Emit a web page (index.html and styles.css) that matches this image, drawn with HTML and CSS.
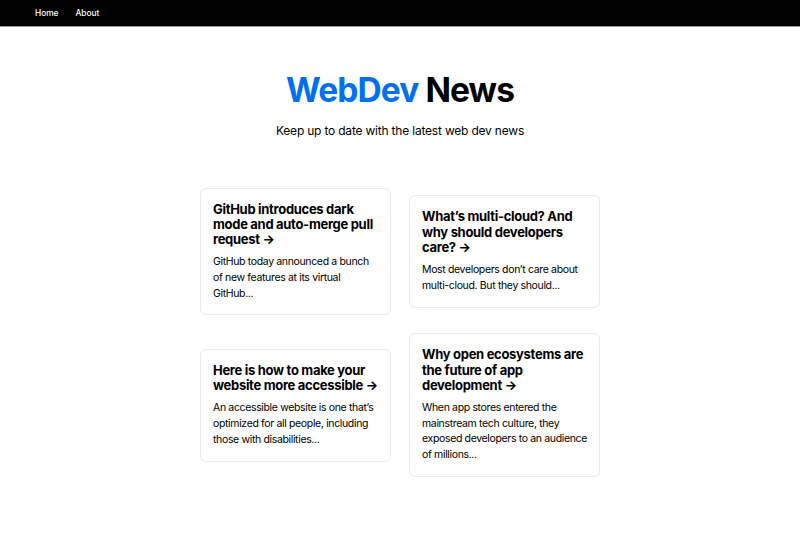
FILE: index.html
```html
<!DOCTYPE html>
<html lang="en">
<head>
<meta charset="utf-8">
<title>WebDev News</title>
<link rel="stylesheet" href="styles.css">
</head>
<body>
<nav class="nav">
  <a class="nav-link" href="#">Home</a>
  <a class="nav-link" href="#">About</a>
</nav>
<main class="main">
  <h1 class="title"><span class="brand">WebDev</span> News</h1>
  <p class="description">Keep up to date with the latest web dev news</p>
  <div class="grid">
    <a class="card" href="#">
      <h3 class="card-title">GitHub introduces dark mode and auto-merge pull request &rarr;</h3>
      <p class="card-text">GitHub today announced a bunch of new features at its virtual GitHub...</p>
    </a>
    <a class="card" href="#">
      <h3 class="card-title">What’s multi-cloud? And why should developers care? &rarr;</h3>
      <p class="card-text">Most developers don’t care about multi-cloud. But they should...</p>
    </a>
    <a class="card" href="#">
      <h3 class="card-title">Here is how to make your website more accessible &rarr;</h3>
      <p class="card-text">An accessible website is one that’s optimized for all people, including those with disabilities...</p>
    </a>
    <a class="card" href="#">
      <h3 class="card-title">Why open ecosystems are the future of app development &rarr;</h3>
      <p class="card-text">When app stores entered the mainstream tech culture, they exposed developers to an audience of millions...</p>
    </a>
  </div>
</main>
</body>
</html>
```
FILE: styles.css
```css
* { box-sizing: border-box; }
html, body { margin: 0; padding: 0; }
body {
  font-family: Inter, "Noto Sans", sans-serif;
  color: #000;
  background: #fff;
}
.nav {
  height: 27px;
  background: #000;
  border-bottom: 1px solid #999;
  display: flex;
  align-items: center;
  padding-left: 35px;
  gap: 17px;
}
.nav-link {
  color: #fff;
  text-decoration: none;
  font-size: 8.3px;
  font-weight: 500;
}
.main {
  display: flex;
  flex-direction: column;
  align-items: center;
  padding-top: 44px;
}
.title {
  margin: 0;
  font-size: 33.5px;
  line-height: 1.15;
  font-weight: 700;
  letter-spacing: -0.9px;
}
.brand { color: #0070f3; }
.description {
  margin: 12px 0 0;
  font-size: 12px;
  line-height: 1.5;
  letter-spacing: -0.2px;
}
.grid {
  margin-top: 39px;
  width: 418px;
  display: flex;
  flex-wrap: wrap;
  align-items: center;
  justify-content: center;
}
.card {
  width: 191px;
  margin: 9px;
  padding: 13px 11px 13px 12px;
  border: 1px solid #eaeaea;
  border-radius: 6px;
  color: inherit;
  text-decoration: none;
}
.card-title {
  margin: 0 0 7px;
  font-size: 13px;
  line-height: 1.17;
  font-weight: 700;
  letter-spacing: -0.3px;
}
.card-text {
  margin: 0;
  font-size: 10.5px;
  line-height: 1.5;
  letter-spacing: -0.35px;
}
```
